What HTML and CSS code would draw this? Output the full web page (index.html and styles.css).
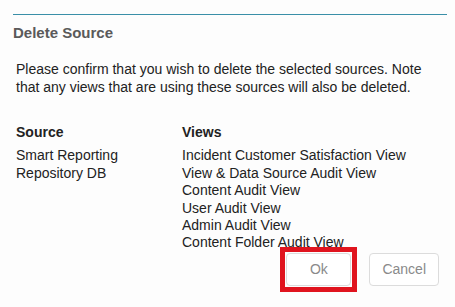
FILE: index.html
```html
<!doctype html>
<html lang="en">
    <head>
        <meta charset="UTF-8" />
        <title>Delete Source</title>
        <link rel="stylesheet" href="styles.css">
    </head>
    <body>
        <div class="dialog">
            <div class="dialog-header">
                <h2 class="dialog-title">Delete Source</h2>
            </div>
            <div class="dialog-body">
                <p class="message">
                    Please confirm that you wish to delete the selected sources. Note
                    that any views that are using these sources will also be deleted.
                </p>
                <div class="source-table">
                    <div class="col col-source">
                        <div class="col-head">Source</div>
                        <div>Smart Reporting</div>
                        <div>Repository DB</div>
                    </div>
                    <div class="col col-views">
                        <div class="col-head">Views</div>
                        <div>Incident Customer Satisfaction View</div>
                        <div>View &amp; Data Source Audit View</div>
                        <div>Content Audit View</div>
                        <div>User Audit View</div>
                        <div>Admin Audit View</div>
                        <div>Content Folder Audit View</div>
                    </div>
                </div>
            </div>
            <div class="dialog-footer">
                <span class="highlight">
                    <button class="btn">Ok</button>
                </span>
                <button class="btn">Cancel</button>
            </div>
        </div>
    </body>
</html>
```

FILE: styles.css
```css
* {
    margin: 0;
    padding: 0;
    box-sizing: border-box;
}

body {
    font-family: "Liberation Sans", Arial, sans-serif;
    background: #ffffff;
    color: #222;
    font-size: 14px;
}

.dialog {
    width: 455px;
    height: 307px;
    padding: 14px 8px 0 13px;
    background: #fdfdfd;
}

.dialog-header {
    border-top: 1px solid #3a8fa8;
    padding-top: 9px;
}

.dialog-title {
    font-size: 15px;
    font-weight: bold;
    color: #5a5a5a;
    line-height: 18px;
}

.dialog-body {
    padding: 18px 0 0 3px;
}

.message {
    line-height: 18px;
    width: 420px;
}

.source-table {
    display: flex;
    margin-top: 28px;
    line-height: 17.4px;
}

.col-source {
    width: 166px;
}

.col-head {
    font-weight: bold;
    margin-bottom: 6px;
}

.dialog-footer {
    display: flex;
    justify-content: flex-end;
    align-items: center;
    gap: 12px;
    padding: 0 8px 0 0;
    margin-top: -5px;
}

.highlight {
    display: flex;
    padding: 1px;
    border: 5px solid #e0141e;
}

.btn {
    height: 33px;
    min-width: 65px;
    padding: 0 12px;
    border: 1px solid #dcdcdc;
    border-radius: 4px;
    background: #ffffff;
    color: #8a8a8a;
    font-family: "Liberation Sans", Arial, sans-serif;
    font-size: 14px;
}
```
